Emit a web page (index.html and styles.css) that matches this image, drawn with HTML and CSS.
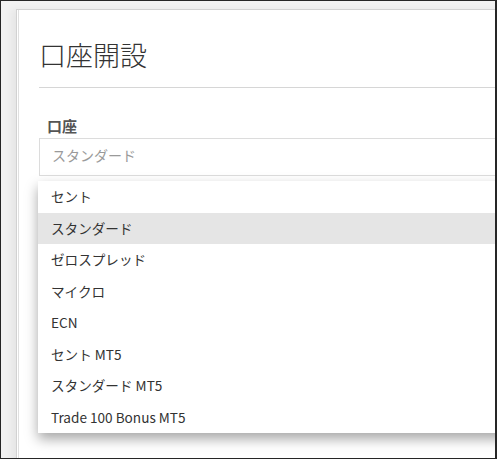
FILE: index.html
```html
<!DOCTYPE html>
<html lang="ja">
<head>
<meta charset="utf-8">
<title>口座開設</title>
<link rel="stylesheet" href="styles.css">
</head>
<body>
<div class="frame">
  <div class="card">
    <h1 class="title">口座開設</h1>
    <hr class="rule">
    <div class="label">口座</div>
    <div class="field">
      <div class="select">スタンダード</div>
      <ul class="menu">
        <li class="item">セント</li>
        <li class="item active">スタンダード</li>
        <li class="item">ゼロスプレッド</li>
        <li class="item">マイクロ</li>
        <li class="item">ECN</li>
        <li class="item">セント MT5</li>
        <li class="item">スタンダード MT5</li>
        <li class="item">Trade 100 Bonus MT5</li>
      </ul>
    </div>
  </div>
</div>
</body>
</html>
```
FILE: styles.css
```css
html, body {
  margin: 0;
  padding: 0;
  background: #222;
}
.frame {
  width: 497px;
  height: 459px;
  box-sizing: border-box;
  border: 1px solid #262626;
  border-right-width: 2px;
  background: #f2f2f2;
  overflow: hidden;
  padding: 8px 0 0 15px;
  font-family: "Noto Sans CJK JP", "Noto Sans", sans-serif;
  color: #333;
}
.card {
  width: 640px;
  height: 600px;
  background: #fff;
  border: 1px solid #d2d2d2;
  box-shadow: inset 1px 0 0 #fff, inset 2px 0 0 #e0e0e0, -5px 0 8px rgba(0,0,0,0.05);
  padding: 29px 0 0 22px;
  box-sizing: border-box;
}
.title {
  margin: 0;
  font-size: 27px;
  font-weight: 300;
  line-height: 32px;
  color: #333;
}
.rule {
  margin: 16px 0 0;
  border: 0;
  border-top: 1px solid #d6d6d6;
  height: 0;
}
.label {
  margin: 27px 0 0 8px;
  font-size: 15px;
  font-weight: 700;
  line-height: 22px;
  color: #555;
}
.field {
  position: relative;
  margin-top: 1px;
}
.select {
  height: 38px;
  box-sizing: border-box;
  border: 1px solid #dcdcdc;
  padding-left: 12px;
  line-height: 33px;
  font-size: 14px;
  color: #9a9a9a;
}
.menu {
  position: absolute;
  top: calc(100% + 5px);
  left: -1px;
  right: 0;
  margin: 0;
  padding: 0;
  list-style: none;
  background: #fff;
  box-shadow: 0 6px 12px rgba(0,0,0,0.35);
}
.item {
  height: 31.5px;
  line-height: 30px;
  padding-left: 13px;
  font-size: 13.6px;
  color: #333;
}
.item.active {
  background: #e5e5e5;
}
```
